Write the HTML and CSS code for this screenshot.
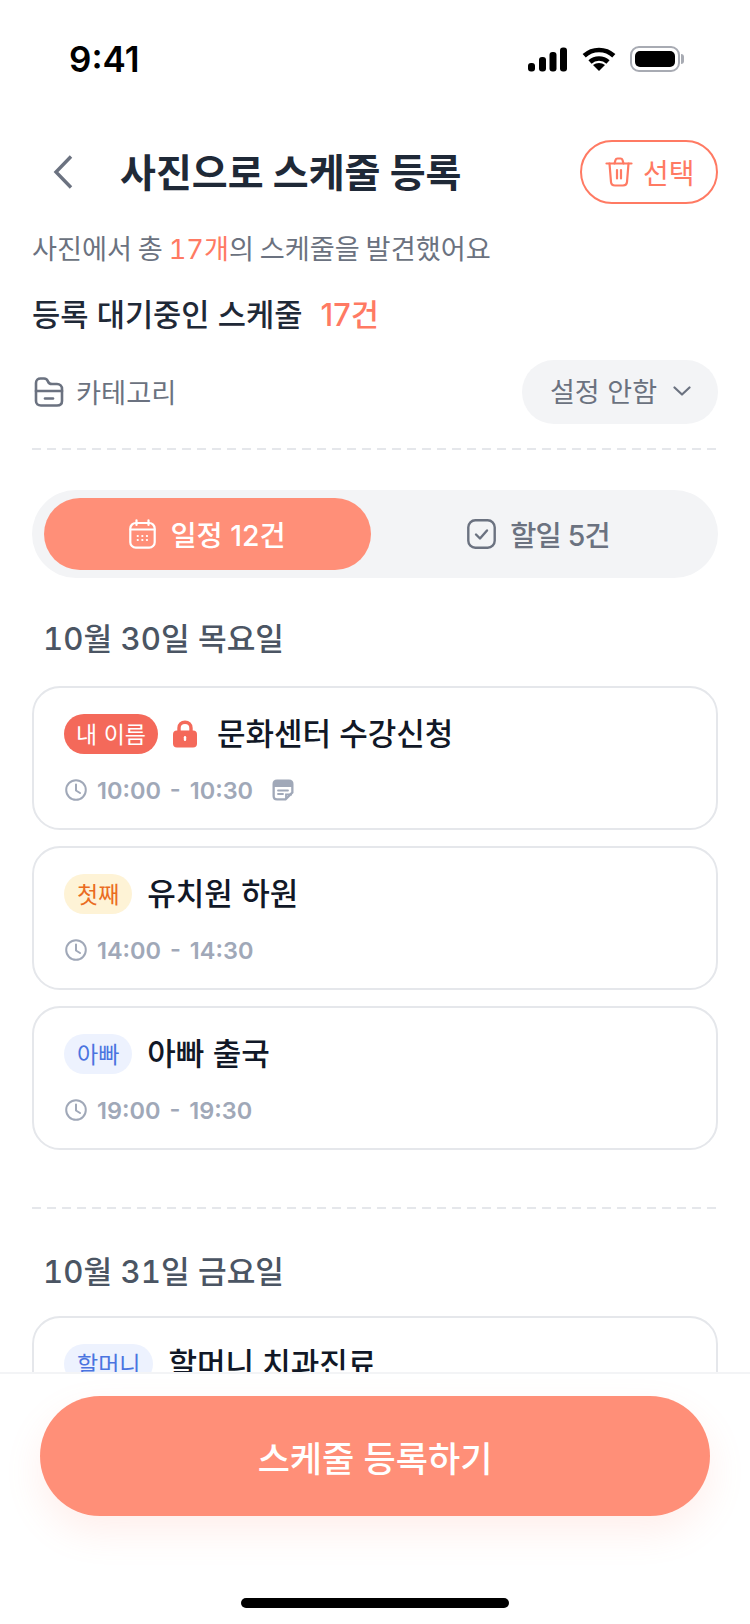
FILE: index.html
```html
<!DOCTYPE html>
<html lang="ko">
<head>
    <meta charset="UTF-8">
    <meta name="viewport" content="width=device-width, initial-scale=1.0">
    <title>사진으로 스케줄 등록</title>
    <link rel="stylesheet" href="styles.css">
</head>
<body>

<div class="screen">
    <div class="status-bar">
        <span class="status-time">9:41</span>
        <div class="status-icons">
            <svg width="40" height="26" viewBox="0 0 40 26" fill="#000">
                <rect x="0" y="17" width="7" height="8.500" rx="3"/>
                <rect x="11" y="11" width="7" height="14.500" rx="3"/>
                <rect x="21.500" y="6" width="7" height="19.500" rx="3"/>
                <rect x="32" y="1.500" width="7" height="24" rx="3"/>
            </svg>
            <svg width="34" height="26" viewBox="0 0 34 26" fill="none" stroke="#000" stroke-width="4.6">
                <path d="M2.200 9.800C10.500 2 23.500 2 31.800 9.800"/>
                <path d="M8 16C13 11.300 21 11.300 26 16"/>
                <path d="M17 25L11 19C14.500 16.300 19.500 16.300 23 19Z" fill="#000" stroke="none"/>
            </svg>
            <div class="battery"><div class="battery-fill"></div></div>
        </div>
    </div>

    <div class="header">
        <svg class="back-icon" width="20" height="34" viewBox="0 0 20 34" fill="none" stroke="#6b7280" stroke-width="3.4">
            <path d="M18 1.5L3 17L18 32.5"/>
        </svg>
        <h1 class="page-title">사진으로 스케줄 등록</h1>
        <button class="select-button">
            <svg width="28" height="30" viewBox="0 0 28 30" fill="none" stroke="#ff7a63" stroke-width="2.2" stroke-linecap="round" stroke-linejoin="round">
                <path d="M1.500 6.500H26.500"/>
                <path d="M9.500 6.500L10.500 3C10.800 2 11.500 1.500 12.500 1.500H15.500C16.500 1.500 17.200 2 17.500 3L18.500 6.500"/>
                <path d="M4.500 6.500L6 25C6.200 27.500 7.500 28.500 10 28.500H18C20.500 28.500 21.800 27.500 22 25L23.500 6.500"/>
                <path d="M12 13V21.500M16 13V21.500"/>
            </svg>
            선택
        </button>
    </div>

    <p class="found-text">사진에서 총 <span class="accent">17개</span>의 스케줄을 발견했어요</p>

    <div class="waiting-row">
        등록 대기중인 스케줄
        <span class="accent">17건</span>
    </div>

    <div class="category-row">
        <svg width="30" height="30" viewBox="0 0 30 30" fill="none" stroke="#6b7280" stroke-width="2.600" stroke-linecap="round" stroke-linejoin="round">
            <path d="M2 24V6C2 3 4 1.500 6.500 1.500H10C12 1.500 13.500 3 14 4.500C14.500 6 16 7 18 7H23C26 7 28 9 28 12V24C28 27 26 28.500 23 28.500H7C4 28.500 2 27 2 24Z"/>
            <path d="M2 14H28"/>
            <path d="M11 21.500H19"/>
        </svg>
        <span class="category-label">카테고리</span>
        <div class="category-select">
            설정 안함
            <svg width="18" height="10" viewBox="0 0 18 10" fill="none" stroke="#6b7280" stroke-width="2.2" stroke-linecap="round" stroke-linejoin="round">
                <path d="M1.500 1.500L9 8.500L16.500 1.500"/>
            </svg>
        </div>
    </div>

    <div class="dash-line"></div>

    <div class="tabs">
        <div class="tab tab-active">
            <svg width="27" height="30" viewBox="0 0 27 30" fill="none" stroke="#fff" stroke-width="2.2" stroke-linecap="round">
                <rect x="1.300" y="4" width="24.400" height="24.700" rx="5.500"/>
                <path d="M1.500 10.500H25.500M7.500 1.300V6M19.500 1.300V6"/>
                <path d="M8.700 17H8.800M13.300 17H13.400M17.900 17H18M8.700 21H8.800M13.300 21H13.400M17.900 21H18" stroke-width="2.200"/>
            </svg>
            일정 12건
        </div>
        <div class="tab tab-todo">
            <svg width="29" height="30" viewBox="0 0 29 30" fill="none" stroke="#6b7280" stroke-width="2.400" stroke-linecap="round" stroke-linejoin="round">
                <rect x="1.300" y="1.300" width="26.400" height="27.400" rx="7"/>
                <path d="M9 15.500L13 19.500L20 11.500"/>
            </svg>
            할일 5건
        </div>
    </div>

    <h2 class="date-title">10월 30일 목요일</h2>

    <div class="card-list">
        <div class="card">
            <div class="card-top">
                <span class="badge badge-me">내 이름</span>
                <svg class="lock-icon" width="26" height="28" viewBox="0 0 26 28">
                    <path d="M7 12V8C7 4.500 9.500 2.200 13 2.200C16.500 2.200 19 4.500 19 8V12" fill="none" stroke="#f4695a" stroke-width="3.400"/>
                    <rect x="1" y="10.500" width="24" height="17" rx="4" fill="#f4695a"/>
                    <rect x="11.800" y="16" width="2.400" height="5" rx="1.200" fill="#fff"/>
                </svg>
                <span class="card-title">문화센터 수강신청</span>
            </div>
            <div class="card-time">
                <svg class="clock-icon" width="22" height="22" viewBox="0 0 22 22" fill="none" stroke="#a0a8b8" stroke-width="2" stroke-linecap="round" stroke-linejoin="round">
                    <circle cx="11" cy="11" r="9.800"/>
                    <path d="M11 5.500V11.500L15 14"/>
                </svg>
                <span>10:00 - 10:30</span>
                <svg class="note-icon" width="22" height="22" viewBox="0 0 22 22">
                    <path d="M5 0.500H17C20 0.500 21.500 2 21.500 5V14L14 21.500H5C2 21.500 0.500 20 0.500 17V5C0.500 2 2 0.500 5 0.500Z" fill="#a0a8b8"/>
                    <path d="M2.800 8H19.200V13L13 19.200H5C3.500 19.200 2.800 18.500 2.800 17Z" fill="#fff"/>
                    <path d="M6 11.500H16M6 15H11" stroke="#a0a8b8" stroke-width="1.800" stroke-linecap="round"/>
                    <path d="M14 20V15.500H20" fill="none" stroke="#a0a8b8" stroke-width="1.800"/>
                </svg>
            </div>
        </div>

        <div class="card">
            <div class="card-top">
                <span class="badge badge-first">첫째</span>
                <span class="card-title">유치원 하원</span>
            </div>
            <div class="card-time">
                <svg class="clock-icon" width="22" height="22" viewBox="0 0 22 22" fill="none" stroke="#a0a8b8" stroke-width="2" stroke-linecap="round" stroke-linejoin="round">
                    <circle cx="11" cy="11" r="9.800"/>
                    <path d="M11 5.500V11.500L15 14"/>
                </svg>
                <span>14:00 - 14:30</span>
            </div>
        </div>

        <div class="card">
            <div class="card-top">
                <span class="badge badge-family">아빠</span>
                <span class="card-title">아빠 출국</span>
            </div>
            <div class="card-time">
                <svg class="clock-icon" width="22" height="22" viewBox="0 0 22 22" fill="none" stroke="#a0a8b8" stroke-width="2" stroke-linecap="round" stroke-linejoin="round">
                    <circle cx="11" cy="11" r="9.800"/>
                    <path d="M11 5.500V11.500L15 14"/>
                </svg>
                <span>19:00 - 19:30</span>
            </div>
        </div>
    </div>

    <div class="dash-line dash-second"></div>

    <h2 class="date-title date-second">10월 31일 금요일</h2>

    <div class="card-list card-list-second">
        <div class="card">
            <div class="card-top">
                <span class="badge badge-family">할머니</span>
                <span class="card-title">할머니 치과진료</span>
            </div>
        </div>
    </div>

    <!-- fixed footer, sits over the list -->
    <div class="footer">
        <button class="submit-button">스케줄 등록하기</button>
        <div class="home-bar"></div>
    </div>
</div>

</body>
</html>
```

FILE: styles.css
```css
* {
    box-sizing: border-box;
}

body {
    font-family: Inter, "Noto Sans CJK KR", sans-serif;
    background-color: #fff;
    margin: 0;
    padding: 0;
}

.screen {
    position: relative;
    width: 750px;
    height: 1624px;
    padding: 0 32px;
    overflow: hidden;
    background-color: #fff;
}

.status-bar {
    display: flex;
    align-items: center;
    justify-content: space-between;
    height: 140px;
    padding: 0 38px 22px 37px;
}

.status-time {
    font-size: 35px;
    font-weight: 600;
    color: #000;
}

.status-icons {
    display: flex;
    align-items: center;
    gap: 14px;
}

.battery {
    position: relative;
    width: 50px;
    height: 26px;
    padding: 3px;
    border: 2px solid #a8abb3;
    border-radius: 9px;
}

.battery::after {
    content: "";
    position: absolute;
    right: -6px;
    top: 6px;
    width: 3px;
    height: 10px;
    border-radius: 0 3px 3px 0;
    background-color: #a8abb3;
}

.battery-fill {
    height: 100%;
    background-color: #000;
    border-radius: 5px;
}

.header {
    display: flex;
    align-items: center;
    height: 64px;
}

.back-icon {
    margin-left: 21px;
}

.page-title {
    margin: 0 0 0 47px;
    padding-bottom: 4px;
    font-size: 39px;
    font-weight: 700;
    color: #1f2937;
}

.select-button {
    display: flex;
    align-items: center;
    gap: 10px;
    margin-left: auto;
    width: 138px;
    height: 64px;
    padding: 0 0 0 23px;
    background-color: #fff;
    border: 2px solid #ff7a63;
    border-radius: 32px;
    color: #ff7a63;
    font-family: inherit;
    font-size: 28px;
}

.found-text {
    margin: 26px 0 0;
    font-size: 27.2px;
    font-variant-numeric: tabular-nums;
    word-spacing: -1.5px;
    line-height: 40px;
    color: #6b7280;
}

.accent {
    color: #ff7a63;
}

.waiting-row {
    display: flex;
    align-items: center;
    gap: 18px;
    margin-top: 25px;
    font-size: 30.7px;
    font-weight: 500;
    line-height: 40px;
    color: #1f2937;
}

.category-row {
    display: flex;
    align-items: center;
    height: 64px;
    margin-top: 25px;
    padding-left: 2px;
}

.category-label {
    margin-left: 12px;
    padding-bottom: 3px;
    font-size: 27.3px;
    color: #6b7280;
}

.category-select {
    display: flex;
    align-items: center;
    gap: 16px;
    margin-left: auto;
    height: 64px;
    padding: 0 27px 3px 28px;
    background-color: #f3f4f6;
    border-radius: 32px;
    font-size: 27px;
    color: #6b7280;
}

.dash-line {
    height: 2px;
    margin-top: 24px;
    background-image: repeating-linear-gradient(90deg, #e5e7eb 0, #e5e7eb 9px, transparent 9px, transparent 15px);
}

.dash-second {
    margin-top: 57px;
}

.tabs {
    display: flex;
    height: 88px;
    margin-top: 40px;
    padding: 8px 12px;
    background-color: #f3f4f6;
    border-radius: 44px;
}

.tab {
    display: flex;
    align-items: center;
    justify-content: center;
    flex: 1;
    gap: 14px;
    padding-bottom: 1px;
    border-radius: 36px;
    font-size: 28.4px;
    font-weight: 500;
    color: #6b7280;
}

.tab-active {
    flex: 0 0 327px;
    background-color: #ff8f78;
    color: #fff;
}

.tab-todo {
    letter-spacing: -0.8px;
}

.date-title {
    margin: 41px 0 0 11px;
    font-size: 31.2px;
    font-variant-numeric: tabular-nums;
    font-weight: 500;
    line-height: 40px;
    color: #4b5563;
}

.date-second {
    margin-top: 43px;
}

.card-list {
    display: flex;
    flex-direction: column;
    gap: 16px;
    margin-top: 27px;
}

.card-list-second {
    margin-top: 24px;
}

.card {
    height: 144px;
    padding: 26px 30px 0;
    border: 2px solid #e5e7eb;
    border-radius: 28px;
    background-color: #fff;
}

.card-top {
    display: flex;
    align-items: center;
    height: 40px;
}

.badge {
    display: flex;
    align-items: center;
    height: 40px;
    padding: 0 13px 2px;
    border-radius: 20px;
    font-size: 23px;
    white-space: nowrap;
}

.badge-me {
    padding: 0 12px 2px;
    background-color: #f4695a;
    color: #fff;
}

.badge-first {
    background-color: #fef3d6;
    color: #ea6c22;
}

.badge-family {
    background-color: #edf2fe;
    color: #4a74e0;
}

.lock-icon {
    margin-left: 14px;
}

.card-title {
    margin-left: 15px;
    padding-bottom: 5px;
    font-size: 31px;
    font-weight: 500;
    color: #111827;
    white-space: nowrap;
}

.lock-icon + .card-title {
    margin-left: 19px;
}

.card-time {
    display: flex;
    align-items: center;
    height: 22px;
    margin-top: 25px;
    font-size: 23.5px;
    font-weight: 600;
    word-spacing: 3px;
    color: #a0a8b8;
}

.clock-icon {
    margin: 0 10px 0 1px;
}

.note-icon {
    margin-left: 19px;
}

.footer {
    position: absolute;
    left: 0;
    right: 0;
    top: 1372px;
    bottom: 0;
    padding: 22px 40px 0;
    background-color: #fff;
    border-top: 2px solid #f3f4f6;
}

.submit-button {
    display: block;
    width: 100%;
    height: 120px;
    background-color: #ff8f78;
    border: none;
    border-radius: 60px;
    color: #fff;
    font-family: inherit;
    font-size: 35px;
    font-weight: 500;
    box-shadow: 0 16px 36px rgba(255, 143, 120, 0.14);
}

.home-bar {
    width: 268px;
    height: 10px;
    margin: 82px auto 0;
    background-color: #000;
    border-radius: 5px;
}
```
